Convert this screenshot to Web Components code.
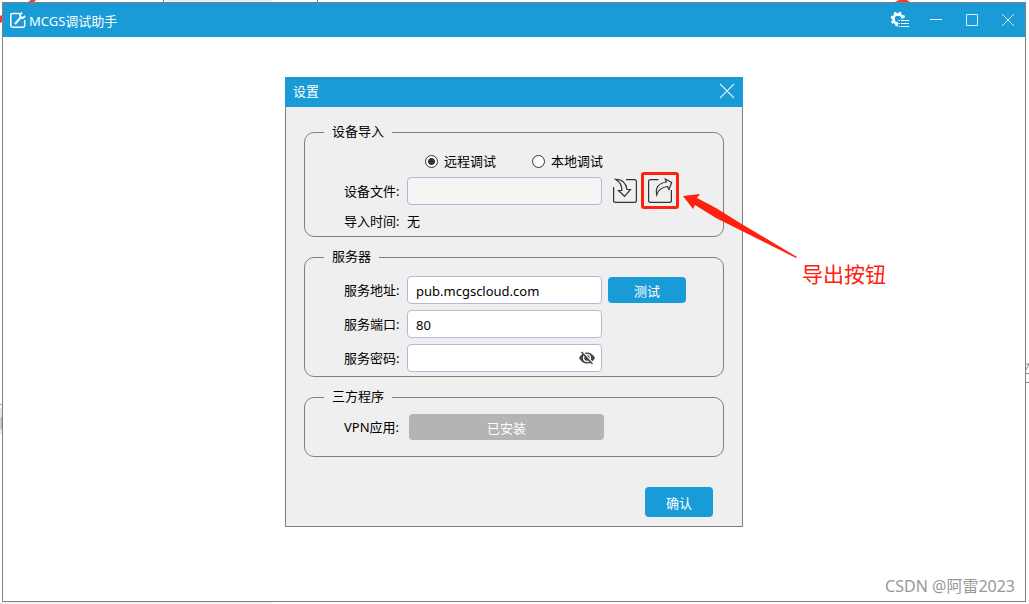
<!DOCTYPE html>
<html lang="zh-CN">
<head>
<meta charset="utf-8">
<meta name="viewport" content="width=device-width, initial-scale=1">
<title>MCGS调试助手</title>
<style>
  html, body { margin: 0; height: 100%; }
  body { font: 13px/20px "Noto Sans", "Noto Sans CJK SC", sans-serif; color: #000; background: #fff; overflow: hidden; }
</style>
</head>
<body>
<app-desktop>
  <app-window heading="MCGS调试助手">
    <settings-dialog heading="设置">
      <setting-group heading="设备导入" class="import">
        <debug-mode></debug-mode>
        <device-file></device-file>
        <import-time></import-time>
      </setting-group>
      <setting-group heading="服务器" class="server">
        <setting-field label="服务地址:" value="pub.mcgscloud.com"><action-button>测试</action-button></setting-field>
        <setting-field label="服务端口:" value="80"></setting-field>
        <setting-field label="服务密码:" kind="password"></setting-field>
      </setting-group>
      <setting-group heading="三方程序" class="third">
        <vpn-status></vpn-status>
      </setting-group>
      <action-button slot="footer" size="large">确认</action-button>
    </settings-dialog>
    <span slot="watermark">CSDN @阿雷2023</span>
  </app-window>
</app-desktop>

<script>
const define = (name, render) => customElements.define(name, class extends HTMLElement {
  constructor() {
    super();
    const t = document.createElement('template');
    t.innerHTML = render(this);
    this.attachShadow({ mode: 'open' }).append(t.content.cloneNode(true));
  }
});

/* What shows of the desktop round the edges of the window */
define('app-desktop', () => `
<style>
  :host { display: flex; box-sizing: border-box; min-height: 100%; padding: 2px 3px 2px 2px; position: relative; background: #fff; }
  svg { position: absolute; }
  .tl { left: 0; top: 0; } .tr { right: 119px; top: 0; } .l { left: 0; top: 404px; } .r { right: 0; top: 360px; } .b { left: 0; bottom: 0; }
  ::slotted(*) { flex: 1; }
</style>
<svg class="tl" width="320" height="26"><path d="M28 2 31 0H36L34 2ZM0 16 2 15V22L0 23Z" fill="#ff3528"/><path d="M163.500 0V2M317.500 0V2" stroke="#888"/><path d="M166 0H272V2H166Z" fill="#eee"/></svg>
<svg class="tr" width="16" height="2"><path d="M1 2 5 0H13L16 2Z" fill="#ff3528"/></svg>
<svg class="l" width="2" height="32"><path d="M0 .5H2" stroke="#999"/><path d="M0 4H2V30H0Z" fill="#e6e6e6"/><path d="M0 13H1V25H0Z" fill="#e6cdb4"/><path d="M1 13H2V25H1Z" fill="#b4aeb4"/></svg>
<svg class="r" width="3" height="24"><path d="M0 4H3L0 10M0 13.500H3M0 22.500H3" stroke="#888" fill="none"/></svg>
<svg class="b" width="272" height="2"><path d="M0 0H272V2H0Z" fill="#f2f2f2"/></svg>
<slot></slot>`);

define('app-window', el => `
<style>
  :host { display: flex; flex-direction: column; position: relative; border: 1px solid #808080; background: #fff; }
  header { display: flex; align-items: center; height: 34px; box-sizing: border-box; padding: 0 5px 0 7px; gap: 3px; background: #189bd7; color: #fff; }
  h1 { margin: 0; font: inherit; padding-top: 1px; flex: 1; }
  nav { display: flex; gap: 12px; }
  button { all: unset; width: 24px; height: 24px; display: grid; place-items: center; }
  svg { display: block; }
  main { flex: 1; display: flex; justify-content: center; align-items: flex-start; padding: 40px 0; }
  footer { position: absolute; right: 10px; bottom: 3px; font: 16px/24px "Noto Sans", "Noto Sans CJK SC", sans-serif; color: #999; }
</style>
<header>
  <svg width="16" height="18" viewBox="0 0 16 18" fill="none" stroke="#fff"><path d="M10 2.500H2.500Q.8 2.500.8 4V14.500Q.8 16.200 2.500 16.200H13Q14.700 16.200 14.700 14.500V9" stroke-width="1.500"/><path d="M5 13 11.500 5.500" stroke-width="2"/><path d="M12 1.500 10 4 10.500 6.500 13 7 15.200 5" stroke-width="1.800"/></svg>
  <h1>${el.getAttribute('heading')}</h1>
  <nav>
    <button aria-label="设置"><svg width="20" height="18" viewBox="0 0 20 18"><circle cx="8" cy="8" r="4.600" fill="none" stroke="#fff" stroke-width="2.600"/><circle cx="8" cy="8" r="6.300" fill="none" stroke="#fff" stroke-width="2.200" stroke-dasharray="2.500 2.450"/><path d="M8 7.500H20V18H8Z" fill="#189bd7"/><path d="M8.500 9.500H10M11 9.500H19M8.500 12.500H10M11 12.500H19M8.500 15.500H10M11 15.500H19" stroke="#fff" stroke-width="1.200"/></svg></button>
    <button aria-label="最小化"><svg width="12" height="12"><path d="M0 5.500H12" stroke="#fff"/></svg></button>
    <button aria-label="最大化"><svg width="12" height="12"><path d="M.5.5H11.500V11.500H.5Z" fill="none" stroke="#d5edf8"/></svg></button>
    <button aria-label="关闭"><svg width="12" height="12"><path d="M0 0 12 12M12 0 0 12" stroke="#d5edf8"/></svg></button>
  </nav>
</header>
<main><slot></slot></main>
<footer><slot name="watermark"></slot></footer>`);

define('settings-dialog', el => `
<style>
  :host { display: block; width: 458px; max-width: 100%; background: #efefef; }
  header { display: flex; align-items: center; justify-content: space-between; box-sizing: border-box; height: 30px; padding: 0 8px 2px; background: #189bd7; color: #fff; }
  h2 { margin: 0; font: inherit; }
  header button { all: unset; display: grid; }
  section { display: flex; flex-direction: column; gap: 10px; border: 1px solid #808080; border-top: 0; padding: 15px 18px 9px; }
  footer { display: flex; justify-content: flex-end; padding: 20px 11px 0 0; }
</style>
<header><h2>${el.getAttribute('heading')}</h2><button aria-label="关闭"><svg width="16" height="16"><path d="M1 1 15 15M15 1 1 15" stroke="#d5edf8" stroke-width="1.200"/></svg></button></header>
<section><slot></slot><footer><slot name="footer"></slot></footer></section>`);

define('setting-group', el => `
<style>
  :host { display: block; }
  fieldset { min-width: 0; margin: 0; border: 1px solid #808080; border-radius: 10px; padding: 6px 19px 3px; }
  legend { padding: 0 8px 2px; line-height: 19px; }
  div { display: flex; flex-direction: column; gap: 4px; padding-left: 20px; }
  :host(.server) fieldset { padding: 8px 19px 4px; }
  :host(.server) div { gap: 6px; }
  :host(.third) fieldset { padding-bottom: 16px; }
</style>
<fieldset><legend>${el.getAttribute('heading')}</legend><div><slot></slot></div></fieldset>`);

define('action-button', () => `
<style>
  :host { display: block; }
  button { font: inherit; color: #fff; width: 78px; height: 26px; border: 0; border-radius: 4px; padding: 1px 0 0; background: #189bd7; }
  :host([size=large]) button { width: 68px; height: 30px; }
</style>
<button><slot></slot></button>`);

const fieldStyle = `
  :host { display: flex; align-items: center; gap: 8px; }
  label.name { width: 55px; white-space: nowrap; }
  input.text { font: inherit; box-sizing: border-box; width: 195px; height: 28px; border: 1px solid #b4b9da; border-radius: 4px; padding: 2px 8px 0; background: #fff; color: #000; outline: 0; }`;

define('debug-mode', () => `
<style>
  :host { display: flex; gap: 36px; height: 24px; padding-left: 81px; }
  label { display: flex; align-items: center; gap: 6px; }
  input { appearance: none; box-sizing: border-box; width: 13px; height: 13px; margin: 0; border: 1px solid #333; border-radius: 50%; background: #fff; }
  input:checked { background: radial-gradient(circle, #333 3px, #fff 4px); }
</style>
<label><input type="radio" name="mode" checked>远程调试</label>
<label><input type="radio" name="mode">本地调试</label>`);

define('device-file', () => `
<style>${fieldStyle}
  input.text { background: #f5f5f5; }
  .tools { display: flex; gap: 11px; padding-left: 3px; }
  button { all: unset; display: grid; position: relative; }
  svg { overflow: visible; }
</style>
<label class="name" for="file">设备文件:</label><input class="text" id="file" readonly>
<div class="tools">
  <button aria-label="导入"><svg width="24" height="24" viewBox="0 0 24 24" fill="none" stroke="#333" stroke-width="1.200"><path d="M.6 8V21.500Q.6 23.400 2.500 23.400H21.500Q23.400 23.400 23.400 21.500V2.500Q23.400.6 21.500.6H13"/><path d="M2.500 .3Q12.500 0 14 10.500H17.500L11.500 17.300 5.500 11.500H8.800Q9.500 4.500 2.500 .3Z"/></svg></button>
  <button aria-label="导出"><svg width="24" height="24" viewBox="0 0 24 24" fill="none" stroke="#333" stroke-width="1.200"><path d="M10.500.6H2.500Q.6.6.6 2.500V21.500Q.6 23.400 2.500 23.400H21.500Q23.400 23.400 23.400 21.500V11"/><path d="M8.700 15.800Q6.500 5 18.300 3L17.300 0 23.700 3.500 21 10.500 19.500 7.500Q11 8.500 8.700 15.800Z"/></svg><callout-note>导出按钮</callout-note></button>
</div>`);

/* Red frame over the export button, with its arrow and caption */
define('callout-note', () => `
<style>
  :host { position: absolute; left: -7px; top: -7px; pointer-events: none; color: #ff2010; }
  .frame { box-sizing: border-box; width: 38px; height: 37px; border: 3px solid; border-radius: 3px; }
  svg { position: absolute; left: 41px; top: 20px; }
  .caption { position: absolute; left: 161px; top: 86px; font-size: 21px; line-height: 32px; white-space: nowrap; }
</style>
<div class="frame"></div>
<svg width="116" height="68"><path d="M1 4 18 2 15 6 34 16 58 31 115 65 114 66 58 38 34 26 13 13 11 17Z" fill="currentColor"/></svg>
<span class="caption"><slot></slot></span>`);

define('import-time', () => `
<style>:host { display: flex; align-items: center; gap: 8px; height: 24px; } span { width: 55px; white-space: nowrap; }</style>
<span>导入时间:</span><output>无</output>`);

define('setting-field', el => {
  const secret = el.getAttribute('kind') === 'password';
  return `
<style>${fieldStyle}
  .box { display: grid; position: relative; }
  .box button { all: unset; position: absolute; right: 7px; top: 6px; display: grid; }
  ::slotted(*) { margin-left: -2px; }
</style>
<label class="name" for="f">${el.getAttribute('label')}</label>
<div class="box"><input class="text" id="f" type="${secret ? 'password' : 'text'}" value="${el.getAttribute('value') || ''}">
${secret ? `<button aria-label="显示密码"><svg width="16" height="16" viewBox="0 0 16 16"><path d="M0 8Q3 2.500 8 2.500T16 8Q13 13.500 8 13.500T0 8Z" fill="#444"/><circle cx="8" cy="8" r="3.400" fill="none" stroke="#fff" stroke-width="1.300"/><path d="M3.500 1.500 14.500 13.500" stroke="#fff" stroke-width="1.300"/><path d="M2.500 2 13.500 14" stroke="#444" stroke-width="1.400"/></svg></button>` : ''}</div>
<slot></slot>`;
});

define('vpn-status', () => `
<style>
  :host { display: flex; align-items: center; gap: 8px; }
  span { width: 57px; white-space: nowrap; }
  button { font: inherit; width: 195px; height: 26px; border: 0; border-radius: 4px; padding: 1px 0 0; background: #b4b4b4; color: #fff; }
</style>
<span>VPN应用:</span><button disabled>已安装</button>`);
</script>
</body>
</html>
